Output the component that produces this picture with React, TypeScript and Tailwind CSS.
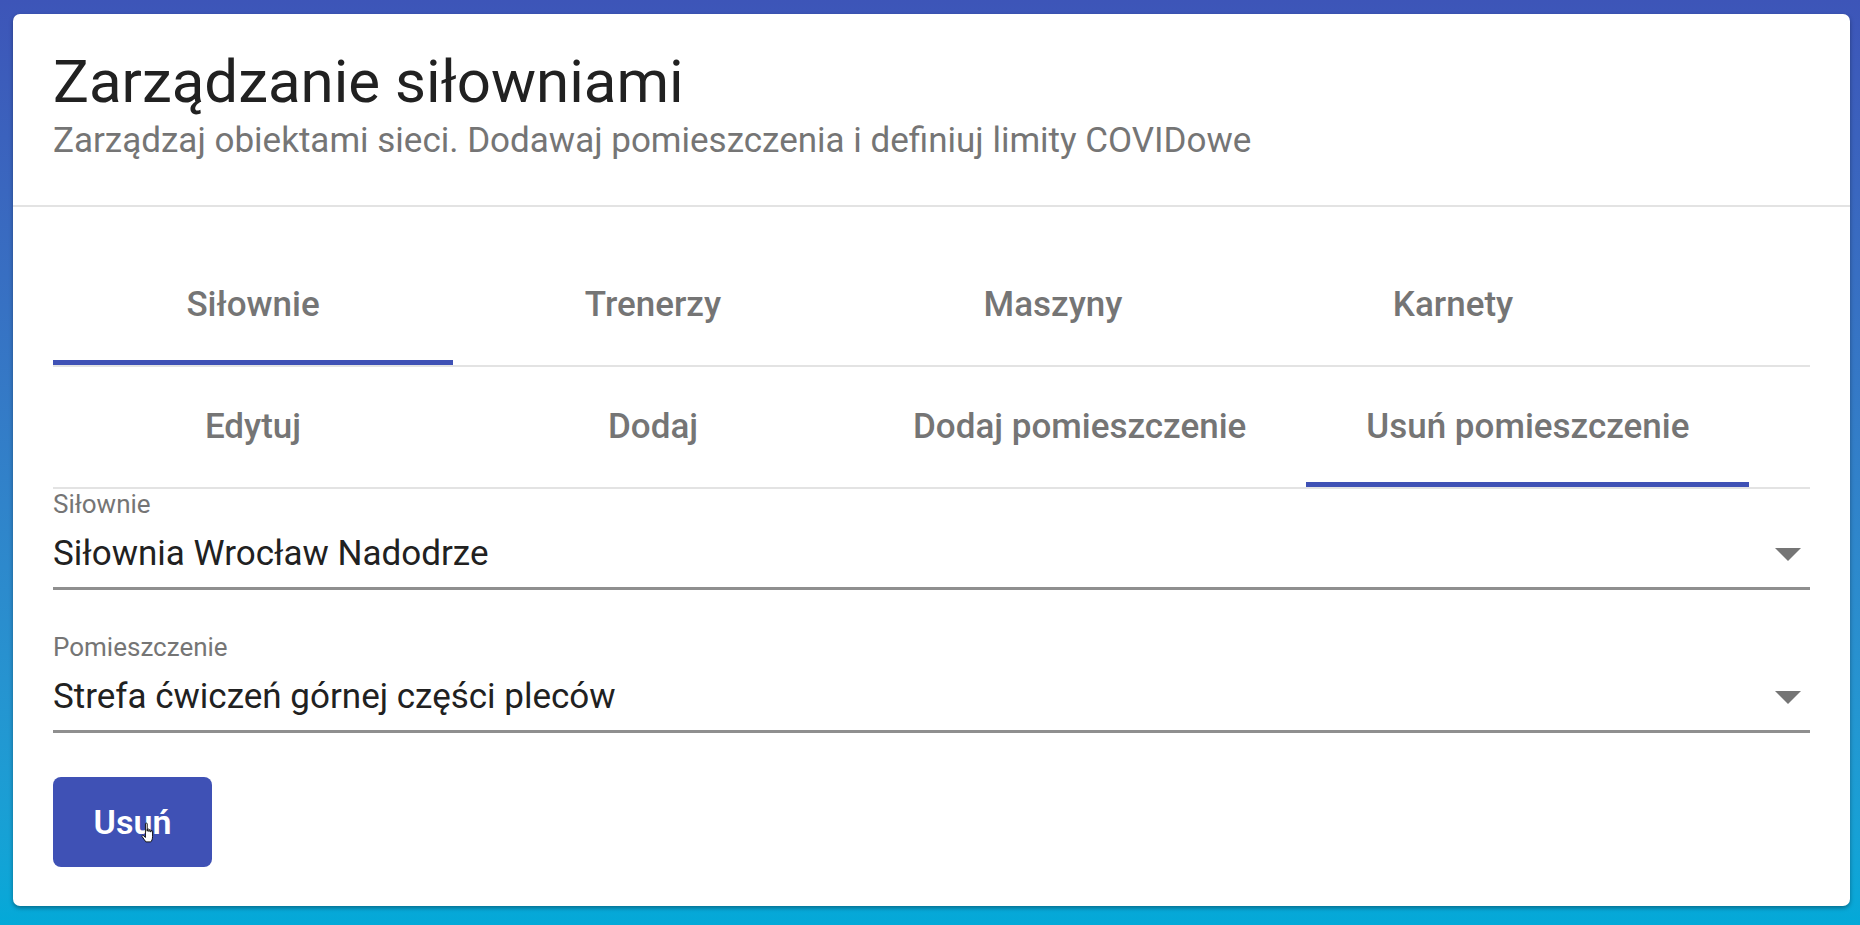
import React from "react";

const topTabs = ["Siłownie", "Trenerzy", "Maszyny", "Karnety"];
const subTabs = ["Edytuj", "Dodaj", "Dodaj pomieszczenie", "Usuń pomieszczenie"];

function TabRow({ items, active }: { items: string[]; active: number }) {
  return (
    <div className="flex border-b-2 border-[#e3e3e3]">
      {items.map((t, i) => (
        <div
          key={t}
          className="relative flex h-[120px] min-w-[400px] items-center justify-center px-[60px] text-[35px] font-medium text-[#757575]"
        >
          {t}
          {i === active && <div className="absolute bottom-0 left-0 right-0 h-[5px] bg-[#3f51b5]" />}
        </div>
      ))}
    </div>
  );
}

function SelectField({ label, value }: { label: string; value: string }) {
  return (
    <div className="flex flex-col">
      <div className="text-[26px] leading-[30px] text-[#757575]">{label}</div>
      <div className="mt-[15px] flex items-center justify-between border-b-[3px] border-[#8f8f8f] pb-[13px]">
        <span className="text-[35px] leading-[40px] text-[#212121]">{value}</span>
        <svg width="26" height="13" viewBox="0 0 26 13" className="mr-[9px]">
          <path d="M0 0 L26 0 L13 13 Z" fill="#757575" />
        </svg>
      </div>
    </div>
  );
}

export default function App() {
  return (
    <div className="h-[925px] w-full overflow-hidden bg-gradient-to-b from-[#3d55b8] to-[#03a9d8] pt-[14px] pl-[13px] pr-[10px] font-['Roboto',sans-serif]">
      <div className="h-[892px] rounded-[7px] bg-white shadow-[0_2px_4px_rgba(0,0,0,0.35)]">
        <div className="px-[40px] pt-[32px] pb-[44px]">
          <h1 className="text-[60px] leading-[72px] text-[#212121]">Zarządzanie siłowniami</h1>
          <p className="mt-[3px] text-[35px] leading-[40px] text-[#757575]">
            Zarządzaj obiektami sieci. Dodawaj pomieszczenia i definiuj limity COVIDowe
          </p>
        </div>
        <div className="h-[2px] bg-[#e3e3e3]" />
        <div className="px-[40px] pt-[38px] pb-[40px]">
          <TabRow items={topTabs} active={0} />
          <TabRow items={subTabs} active={3} />
          <SelectField label="Siłownie" value="Siłownia Wrocław Nadodrze" />
          <div className="mt-[42px]">
            <SelectField label="Pomieszczenie" value="Strefa ćwiczeń górnej części pleców" />
          </div>
          <button className="relative mt-[44px] h-[90px] w-[159px] rounded-[8px] bg-[#3f51b5] text-[34px] font-semibold text-white">
            Usuń
            <svg width="16" height="22" viewBox="0 0 18 24" className="absolute left-[88px] top-[45px]">
              <path
                d="M5 1.5 C5 0.7 7 0.7 7 1.5 L7 10 L7 8 C7 7.2 9 7.2 9 8 L9 10.5 L9 9 C9 8.2 11 8.2 11 9 L11 11 L11 10 C11 9.2 13 9.2 13 10 L13 16 C13 19 12 21 11 22 L5.5 22 C4.5 20.5 2.5 18 1.2 16 C0.6 15 1.6 14 2.6 14.8 L5 17 Z"
                fill="white"
                stroke="black"
                strokeWidth="1"
                strokeLinejoin="round"
              />
            </svg>
          </button>
        </div>
      </div>
    </div>
  );
}
